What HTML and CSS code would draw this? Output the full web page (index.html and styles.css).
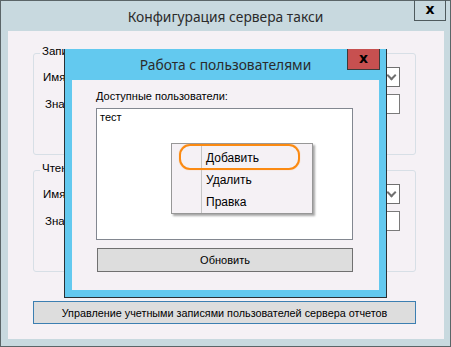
FILE: index.html
```html
<!DOCTYPE html>
<html lang="ru">

<head>
    <meta charset="UTF-8">
    <meta name="viewport" content="width=device-width, initial-scale=1.0">
    <title>Конфигурация сервера такси</title>
    <link rel="stylesheet" href="styles.css">
</head>

<body>
    <div class="window">
        <div class="titlebar">
            <span class="title">Конфигурация сервера такси</span>
            <span class="close-btn">x</span>
        </div>

        <div class="client">
            <div class="group">
                <span class="legend">Запись</span>
                <div class="row">
                    <span class="row-label">Имя:</span>
                    <span class="combo"><span class="arrow"></span></span>
                </div>
                <div class="row">
                    <span class="row-label shift">Значение:</span>
                    <span class="textbox"></span>
                </div>
            </div>

            <div class="group">
                <span class="legend">Чтение</span>
                <div class="row">
                    <span class="row-label">Имя:</span>
                    <span class="combo"><span class="arrow"></span></span>
                </div>
                <div class="row">
                    <span class="row-label shift">Значение:</span>
                    <span class="textbox"></span>
                </div>
            </div>

            <button class="wide-btn">Управление учетными записями пользователей сервера отчетов</button>
        </div>
    </div>

    <!-- modal dialog on top of the main window -->
    <div class="dialog">
        <div class="dialog-titlebar">
            <span class="title">Работа с пользователями</span>
            <span class="dialog-close">x</span>
        </div>
        <div class="dialog-client">
            <div class="caption">Доступные пользователи:</div>
            <div class="listbox">
                <div class="list-item">тест</div>
            </div>
            <button class="refresh-btn">Обновить</button>
        </div>
    </div>

    <div class="context-menu">
        <div class="menu-item">Добавить</div>
        <div class="menu-item">Удалить</div>
        <div class="menu-item">Правка</div>
    </div>

    <div class="highlight"></div>
</body>

</html>
```

FILE: styles.css
```css
body {
    margin: 0;
    font-family: 'Liberation Sans', Arial, sans-serif;
    color: #000;
}

.window {
    width: 451px;
    height: 347px;
    box-sizing: border-box;
    border: 1px solid #5b6568;
    background-color: #c8d9df;
    display: flex;
    flex-direction: column;
}

.titlebar {
    height: 30px;
    display: flex;
    justify-content: center;
    align-items: center;
    position: relative;
}

.title {
    font-family: 'Noto Sans', sans-serif;
    font-size: 13.8px;
    color: #2b2b2b;
}

.close-btn {
    position: absolute;
    top: -1px;
    right: 4px;
    width: 32px;
    height: 21px;
    border: 1px solid #4f5a5d;
    border-top: none;
    box-sizing: border-box;
    display: flex;
    justify-content: center;
    align-items: center;
    font-family: 'DejaVu Sans', sans-serif;
    font-weight: bold;
    font-size: 14px;
    line-height: 1;
    padding-bottom: 3px;
}

.client {
    margin: 0 6px 0 7px;
    height: 308px;
    background-color: #f5f1f5;
    padding: 22px 0 0 25px;
    box-sizing: border-box;
    font-size: 11.5px;
}

.group {
    width: 383px;
    height: 102px;
    box-sizing: border-box;
    border: 1px solid #d7dfe6;
    border-radius: 3px;
    position: relative;
    padding: 13px 15px 0 9px;
    margin-bottom: 15px;
}

.legend {
    position: absolute;
    top: -9px;
    left: 6px;
    padding: 0 2px;
    background-color: #f5f1f5;
}

.row {
    display: flex;
    align-items: center;
    justify-content: space-between;
    height: 20px;
    margin-bottom: 7px;
}

.row-label.shift {
    margin-left: 2px;
}

.combo {
    width: 270px;
    height: 20px;
    box-sizing: border-box;
    border: 1px solid #707070;
    background-color: #fff;
    position: relative;
}

.arrow {
    position: absolute;
    right: 4px;
    top: 4px;
    width: 5px;
    height: 5px;
    border-right: 2px solid #707070;
    border-bottom: 2px solid #707070;
    transform: rotate(45deg);
}

.textbox {
    width: 270px;
    height: 20px;
    box-sizing: border-box;
    border: 1px solid #7a7a7a;
    background-color: #fff;
}

.wide-btn {
    display: block;
    width: 383px;
    height: 23px;
    margin-top: 29px;
    border: 1px solid #3c7fb1;
    background-color: #dddddd;
    font-family: 'Liberation Sans', Arial, sans-serif;
    font-size: 10.8px;
    white-space: nowrap;
    padding: 0;
    color: #000;
}

.dialog {
    position: absolute;
    left: 64px;
    top: 49px;
    width: 323px;
    height: 249px;
    box-sizing: border-box;
    border: 1px solid #2a3033;
    border-top: none;
    background-color: #63c9ef;
    display: flex;
    flex-direction: column;
}

.dialog-titlebar {
    height: 31px;
    display: flex;
    justify-content: center;
    align-items: center;
    position: relative;
}

.dialog-close {
    position: absolute;
    top: 0;
    right: 6px;
    width: 33px;
    height: 21px;
    box-sizing: border-box;
    border: 1px solid #3b3b3b;
    border-top: none;
    background-color: #c75050;
    display: flex;
    justify-content: center;
    align-items: center;
    font-family: 'DejaVu Sans', sans-serif;
    font-weight: bold;
    font-size: 14px;
    line-height: 1;
    padding-bottom: 3px;
}

.dialog-client {
    margin: 0 7px;
    height: 210px;
    background-color: #f5f1f5;
    padding: 10px 0 0 24px;
    box-sizing: border-box;
    font-size: 11px;
}

.caption {
    height: 18px;
}

.listbox {
    width: 257px;
    height: 132px;
    box-sizing: border-box;
    border: 1px solid #828790;
    background-color: #fff;
    padding: 0 3px;
}

.list-item {
    line-height: 16px;
}

.refresh-btn {
    display: block;
    width: 256px;
    height: 24px;
    margin: 8px 0 0 1px;
    border: 1px solid #707070;
    background-color: #dddddd;
    font-family: 'Liberation Sans', Arial, sans-serif;
    font-size: 11px;
    padding: 0;
    color: #000;
}

.context-menu {
    position: absolute;
    left: 171px;
    top: 143px;
    width: 142px;
    height: 71px;
    box-sizing: border-box;
    border: 1px solid #979797;
    background: linear-gradient(to right, #f5f1f5 29px, #c5c5c5 29px, #c5c5c5 30px, #f5f1f5 30px);
    box-shadow: 2px 2px 2px rgba(0, 0, 0, 0.35);
    padding: 3px 0 0 34px;
    font-size: 12px;
}

.menu-item {
    height: 22px;
    line-height: 22px;
}

.highlight {
    position: absolute;
    left: 179px;
    top: 144px;
    width: 121px;
    height: 26px;
    box-sizing: border-box;
    border: 2px solid #fb8a12;
    border-radius: 11px;
    box-shadow: 0 0 1px #fbb060;
}
```
